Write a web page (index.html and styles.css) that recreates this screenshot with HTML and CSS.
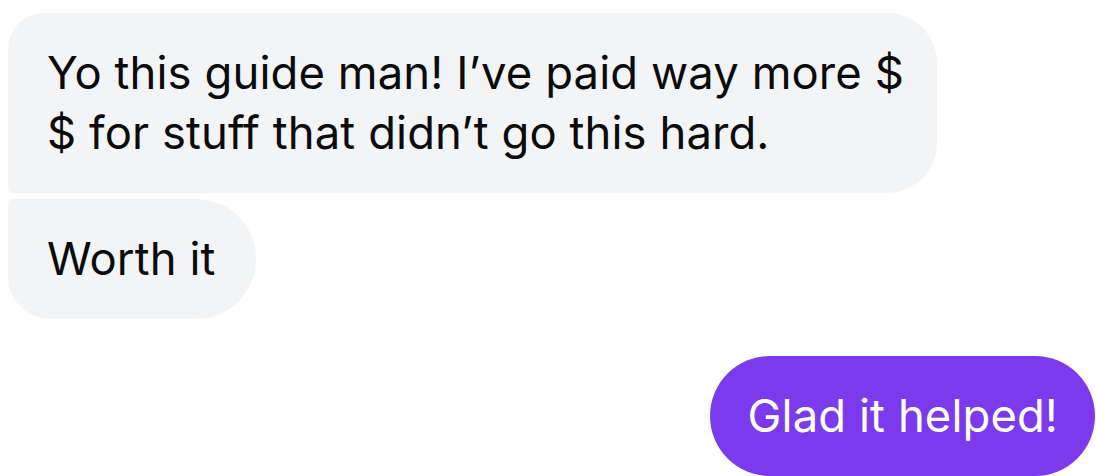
FILE: index.html
```html
<!DOCTYPE html>
<html lang="en">
<head>
<meta charset="utf-8">
<link rel="stylesheet" href="styles.css">
</head>
<body>
<div class="thread">
  <div class="msg received first">Yo this guide man! I’ve paid way more $ $ for stuff that didn’t go this hard.</div>
  <div class="msg received last">Worth it</div>
  <div class="msg sent">Glad it helped!</div>
</div>
</body>
</html>
```

FILE: styles.css
```css
html, body {
  margin: 0;
  padding: 0;
  background: #ffffff;
}

.thread {
  display: flex;
  flex-direction: column;
  align-items: flex-start;
  padding: 13px 1px 0 8px;
  font-family: Inter, "Liberation Sans", sans-serif;
  font-size: 45.4px;
  letter-spacing: 0.1px;
  line-height: 60px;
}

.msg {
  box-sizing: border-box;
  padding: 30px 40px 30px 39px;
}

.received {
  background: #f3f4f6;
  color: #0b0b0c;
  max-width: 929px;
}

.received.first {
  padding-right: 24px;
  border-radius: 36px 50px 50px 5px;
}

.received.last {
  margin-top: 6px;
  border-radius: 5px 60px 60px 42px;
}

.sent {
  align-self: flex-end;
  margin-top: 37px;
  background: #7c3aed;
  color: #ffffff;
  border-radius: 60px;
  padding: 30px 37px 30px 38px;
}
```
